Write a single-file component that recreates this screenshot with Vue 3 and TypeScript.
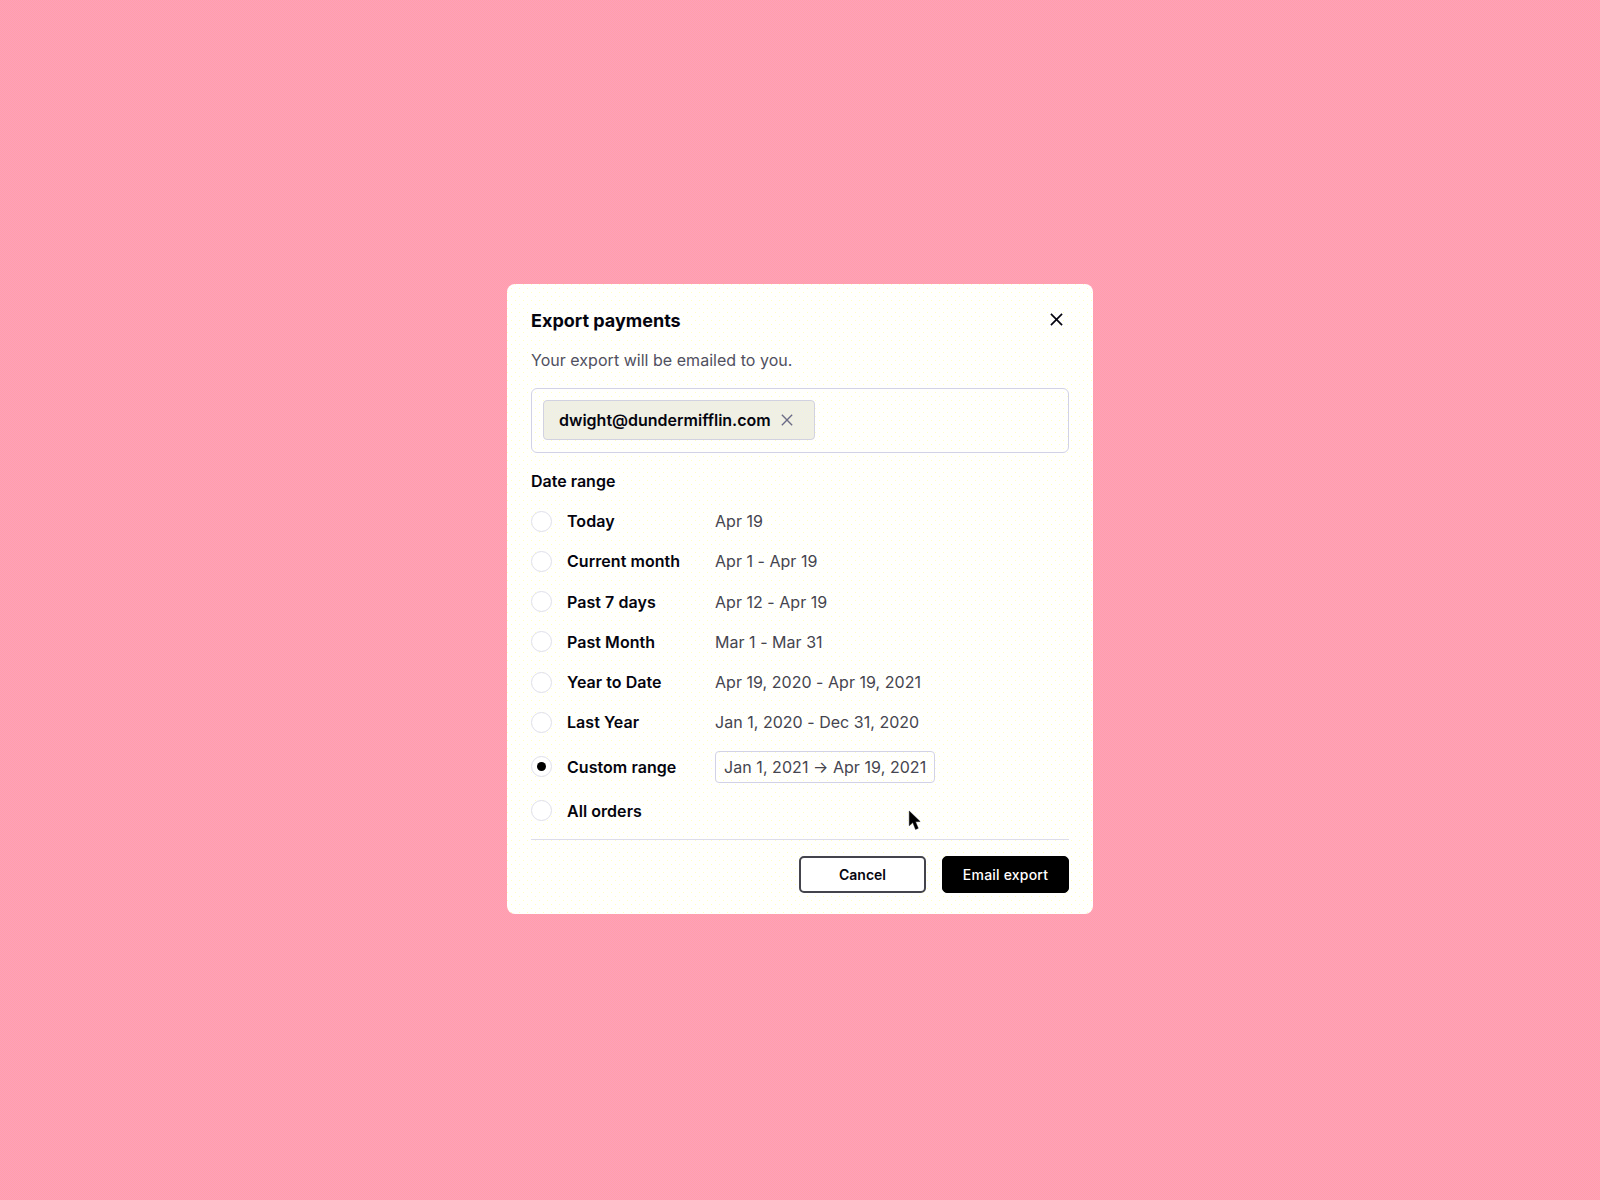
<script setup lang="ts">
interface RangeOption {
  label: string
  dates?: string
  custom?: boolean
}

const ranges: RangeOption[] = [
  { label: 'Today', dates: 'Apr 19' },
  { label: 'Current month', dates: 'Apr 1 - Apr 19' },
  { label: 'Past 7 days', dates: 'Apr 12 - Apr 19' },
  { label: 'Past Month', dates: 'Mar 1 - Mar 31' },
  { label: 'Year to Date', dates: 'Apr 19, 2020 - Apr 19, 2021' },
  { label: 'Last Year', dates: 'Jan 1, 2020 - Dec 31, 2020' },
  { label: 'Custom range', dates: 'Jan 1, 2021 → Apr 19, 2021', custom: true },
  { label: 'All orders' },
]
</script>

<template>
  <div class="page">
    <div class="modal">
      <div class="modal-head">
        <h2 class="title">Export payments</h2>
        <svg class="close" viewBox="0 0 14 14" fill="none" stroke="currentColor" stroke-width="1.8">
          <path d="M1 1L13 13M13 1L1 13" />
        </svg>
      </div>
      <p class="subtitle">Your export will be emailed to you.</p>

      <div class="email-box">
        <span class="chip">
          dwight@dundermifflin.com
          <svg class="chip-x" viewBox="0 0 14 14" fill="none" stroke="currentColor" stroke-width="1.6">
            <path d="M1 1L13 13M13 1L1 13" />
          </svg>
        </span>
      </div>

      <div class="section-label">Date range</div>
      <div class="ranges">
        <div v-for="r in ranges" :key="r.label" class="range" :class="{ 'range-custom': r.custom }">
          <span class="radio" :class="{ checked: r.custom }"></span>
          <span class="range-label">{{ r.label }}</span>
          <span v-if="r.dates" class="range-dates" :class="{ 'date-box': r.custom }">{{ r.dates }}</span>
        </div>
      </div>

      <div class="footer">
        <button class="btn btn-ghost">Cancel</button>
        <button class="btn btn-primary">Email export</button>
      </div>

      <svg class="cursor" viewBox="0 0 12 20">
        <path d="M1 1L1 15L4.4 12L7 18.5L9.6 17.4L7 11.2L11.4 11Z" fill="#000" stroke="#000" stroke-width="0.4" />
      </svg>
    </div>
  </div>
</template>

<style>
html,
body {
  margin: 0;
}
</style>

<style scoped>
.page {
  box-sizing: border-box;
  min-height: 1200px;
  padding-bottom: 2px;
  display: flex;
  align-items: center;
  justify-content: center;
  font-family: Inter, "Liberation Sans", sans-serif;
  background-color: #ff9fb0;
  background-image: repeating-conic-gradient(#ff9ebb 0 25%, #ffa1a8 0 50%);
  background-size: 2px 2px;
}

.modal {
  position: relative;
  box-sizing: border-box;
  width: 586px;
  height: 630px;
  padding: 25px 24px 22px;
  border-radius: 8px;
  background-color: #fffffd;
  background-image:
    conic-gradient(at 1px 1px, transparent 75%, #ffffc0 0),
    conic-gradient(at 1px 1px, transparent 75%, #ffffc0 0);
  background-size: 8px 8px;
  background-position: 0 0, 4px 4px;
}

.modal-head {
  display: flex;
  align-items: center;
  justify-content: space-between;
  height: 24px;
}

.title {
  margin: 0;
  font-size: 18px;
  line-height: 24px;
  font-weight: 700;
  color: #05050f;
}

.close {
  width: 13px;
  height: 13px;
  margin: 0 6px 4px 0;
  color: #05050f;
}

.subtitle {
  margin: 15px 0 0;
  font-size: 16px;
  line-height: 24px;
  letter-spacing: 0.03px;
  color: #50505f;
}

.email-box {
  box-sizing: border-box;
  height: 65px;
  margin-top: 16px;
  padding: 11px 11px;
  border: 1px solid #d2d2e6;
  border-radius: 6px;
}

.chip {
  box-sizing: border-box;
  display: inline-flex;
  align-items: center;
  gap: 10px;
  height: 40px;
  padding: 0 21px 0 15px;
  border: 1px solid #d2d2e0;
  border-radius: 4px;
  font-size: 16px;
  font-weight: 600;
  color: #05050f;
  background-color: #f0f0ea;
  background-image: repeating-conic-gradient(#f6f6d6 0 25%, #e9e9f2 0 50%);
  background-size: 2px 2px;
}

.chip-x {
  width: 12px;
  height: 12px;
  color: #6c6c85;
}

.section-label {
  margin-top: 16px;
  font-size: 16px;
  line-height: 24px;
  font-weight: 600;
  color: #05050f;
}

.ranges {
  margin-top: 8px;
}

.range {
  display: flex;
  align-items: center;
  height: 40.25px;
}

.range-custom {
  height: 48px;
}

.radio {
  box-sizing: border-box;
  display: flex;
  align-items: center;
  justify-content: center;
  flex: none;
  width: 21px;
  height: 21px;
  border: 1.5px solid #dfdfea;
  border-radius: 50%;
  background: #fff;
}

.radio.checked::after {
  content: "";
  width: 9px;
  height: 9px;
  border-radius: 50%;
  background: #000;
}

.range-label {
  flex: none;
  width: 148px;
  margin-left: 15px;
  font-size: 16px;
  font-weight: 600;
  letter-spacing: 0.05px;
  color: #05050f;
}

.range-dates {
  font-size: 16px;
  letter-spacing: 0.03px;
  color: #45454f;
}

.date-box {
  box-sizing: border-box;
  display: inline-flex;
  align-items: center;
  height: 32px;
  padding: 0 8px;
  border: 1px solid #d2d2e6;
  border-radius: 4px;
  letter-spacing: 0.06px;
}

.footer {
  display: flex;
  justify-content: flex-end;
  gap: 16px;
  margin-top: 8px;
  padding-top: 16px;
  border-top: 1px solid #dcdcea;
}

.btn {
  box-sizing: border-box;
  width: 127px;
  height: 37px;
  border-radius: 5px;
  font-family: inherit;
  font-size: 14px;
  font-weight: 600;
}

.btn-ghost {
  border: 2px solid #44444c;
  background: #fff;
  color: #05050f;
}

.btn-primary {
  border: 1px solid #000;
  background: #000;
  font-weight: 500;
  letter-spacing: 0.2px;
  color: #fff;
}

.cursor {
  position: absolute;
  left: 401px;
  top: 526px;
  width: 13px;
  height: 21px;
}
</style>
